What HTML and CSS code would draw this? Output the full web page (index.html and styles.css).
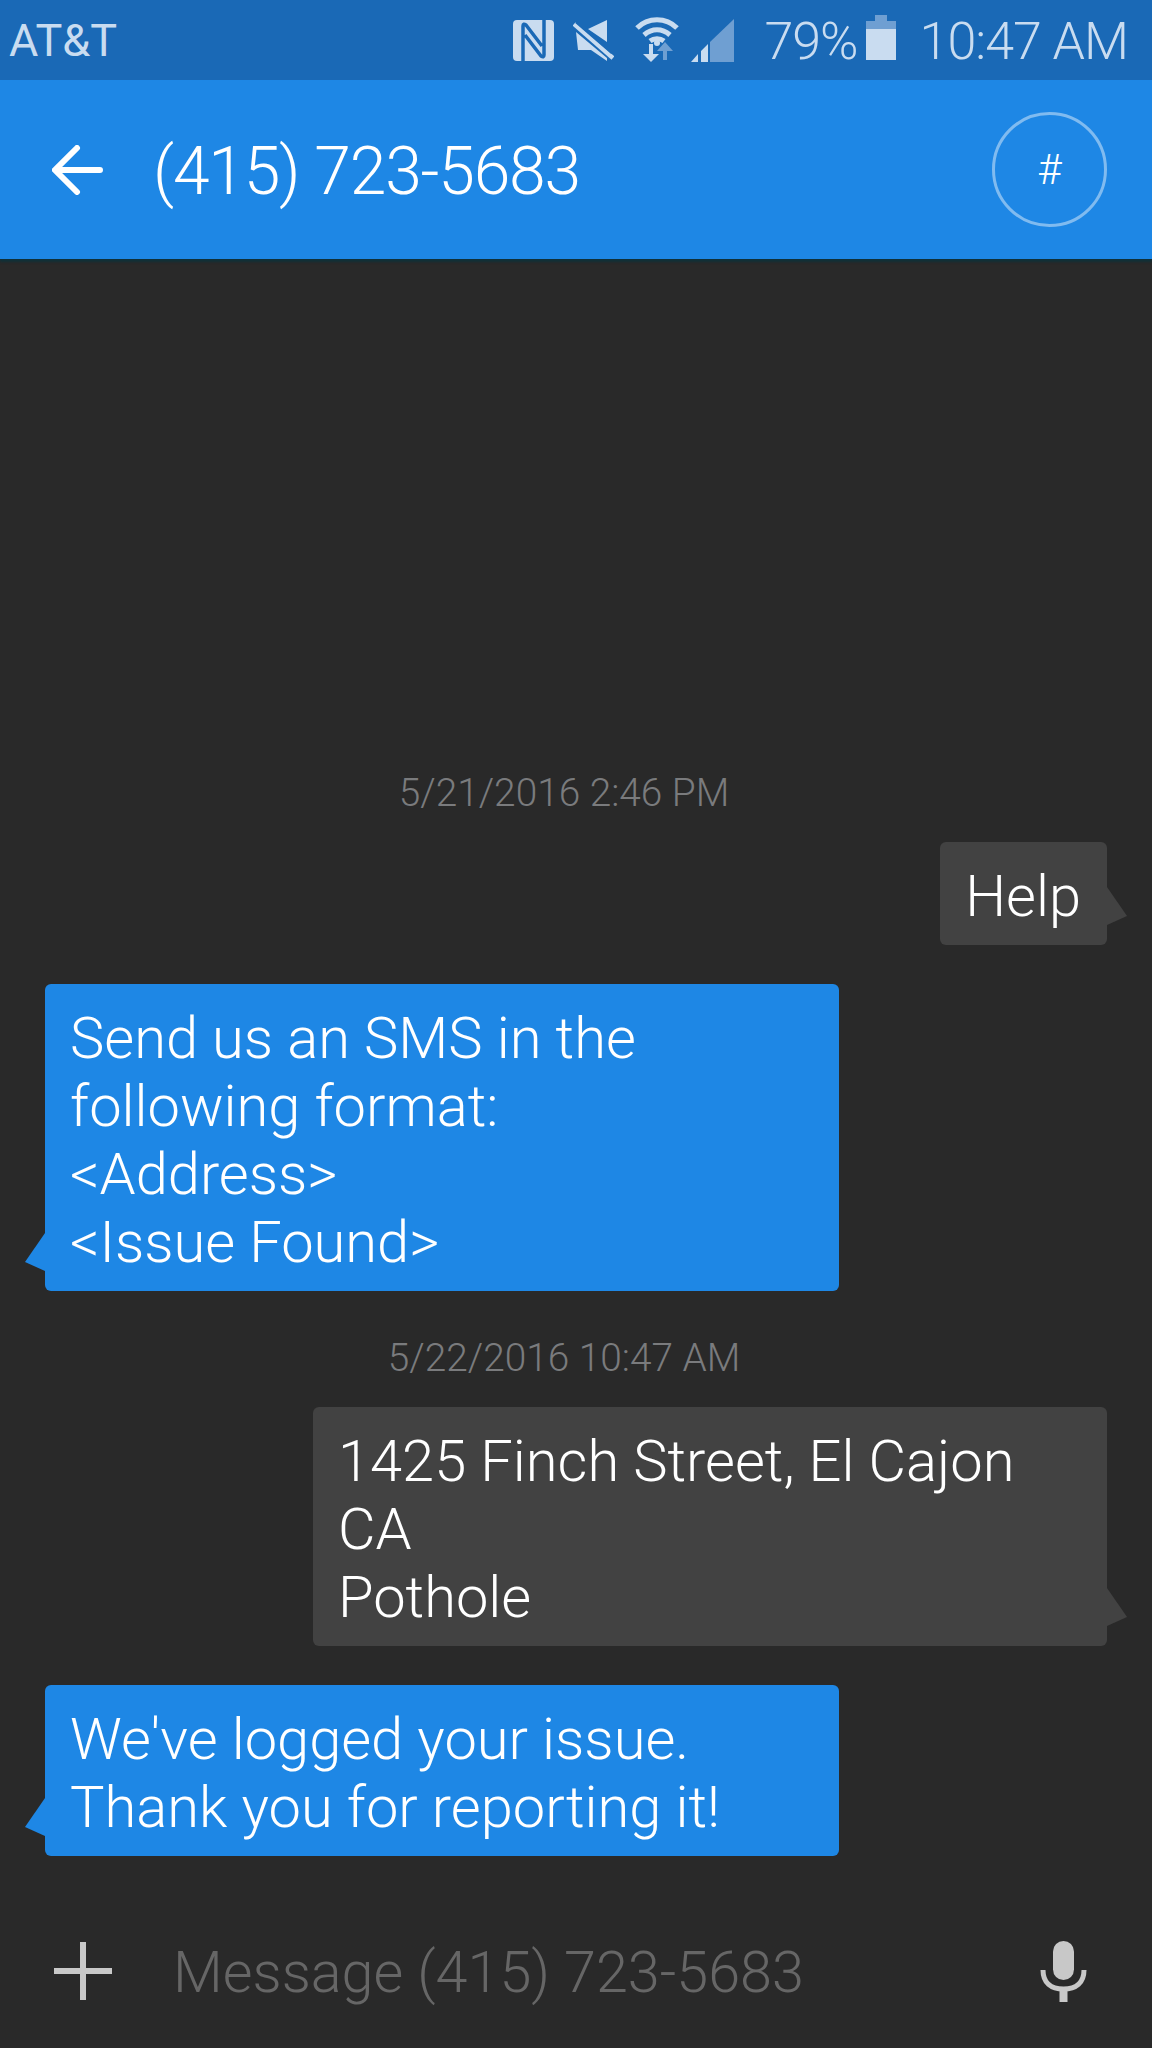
FILE: index.html
```html
<!DOCTYPE html>
<html lang="en">
<head>
    <meta charset="UTF-8">
    <meta name="viewport" content="width=device-width, initial-scale=1.0">
    <title>Messages</title>
    <link rel="stylesheet" href="styles.css">
</head>
<body>
    <div class="phone">
        <div class="status-bar">
            <span class="carrier">AT&amp;T</span>
            <div class="status-right">
                <svg class="icon-nfc" width="41" height="41" viewBox="0 0 41 41">
                    <rect width="41" height="41" rx="4" fill="#c9dcf0"/>
                    <path fill="none" stroke="#1a69b6" stroke-width="3.5" d="M10 41V6q0-3 3-1l16 21M31 0v35q0 3-3 1L12 15"/>
                </svg>
                <svg class="icon-mute" width="41" height="41" viewBox="0 0 41 41">
                    <path fill="#c9dcf0" d="M15 9L34 0v22zM3 12l31 26v3L18 30H5z"/>
                    <path stroke="#c9dcf0" stroke-width="4.5" d="M1 4l39 34"/>
                    <path stroke="#1a69b6" stroke-width="2.5" d="M3 2l36 31"/>
                </svg>
                <svg class="icon-wifi" width="44" height="46" viewBox="0 0 44 46">
                    <path fill="none" stroke="#c9dcf0" stroke-width="5" d="M2 12c11-11 29-11 40 0M9 19c8-7 18-7 26 0M15 25c4-3 10-3 14 0"/>
                    <circle cx="22" cy="27" r="3" fill="#c9dcf0"/>
                    <path fill="#c9dcf0" d="M14 28h4v10h6l-8 8-8-8h6z"/>
                    <path fill="#6f9fd2" d="M30 26l8 9h-6v9h-4v-9h-6z"/>
                </svg>
                <svg class="icon-signal" width="43" height="43" viewBox="0 0 43 43">
                    <path fill="#6f9fd2" d="M43 0v43H19V23z"/>
                    <path fill="#c9dcf0" d="M0 43l7-8v8zM10 32l7-7v18h-7z"/>
                </svg>
                <span class="battery-pct">79%</span>
                <div class="battery"><div class="battery-fill"></div></div>
                <span class="clock">10:47 AM</span>
            </div>
        </div>
        <div class="header">
            <svg class="back-arrow" width="51" height="50" viewBox="0 0 51 50">
                <path fill="none" stroke="#fff" stroke-width="6" stroke-linecap="round" d="M25 3L3 25l22 22M4 25h44"/>
            </svg>
            <div class="title">(415) 723-5683</div>
            <div class="dial-btn">#</div>
        </div>
        <div class="thread">
            <div class="stamp">5/21/2016 2:46 PM</div>
            <div class="bubble sent">Help</div>
            <div class="bubble received">Send us an SMS in the<br>following format:<br>&lt;Address&gt;<br>&lt;Issue Found&gt;</div>
            <div class="stamp stamp-two">5/22/2016 10:47 AM</div>
            <div class="bubble sent wide">1425 Finch Street, El Cajon<br>CA<br>Pothole</div>
            <div class="bubble received">We've logged your issue.<br>Thank you for reporting it!</div>
        </div>
        <div class="composer">
            <svg class="plus" width="58" height="58" viewBox="0 0 58 58">
                <path fill="#c8c8c8" d="M26 0h6v58h-6zM0 26h58v6H0z"/>
            </svg>
            <div class="placeholder">Message (415) 723-5683</div>
            <svg class="mic" width="47" height="61" viewBox="0 0 47 61">
                <rect x="13" y="0" width="21" height="39" rx="10.5" fill="#c8c8c8"/>
                <path fill="none" stroke="#c8c8c8" stroke-width="5" d="M3 29c0 13 8 19 20.500 19s20.500-6 20.500-19"/>
                <path fill="#c8c8c8" d="M19.500 47h8v14h-8z"/>
            </svg>
        </div>
    </div>
</body>
</html>
```

FILE: styles.css
```css
* {
    box-sizing: border-box;
}
html, body {
    margin: 0;
    padding: 0;
}
body {
    font-family: Roboto, "Liberation Sans", sans-serif;
    background-color: #292929;
}
.phone {
    width: 1152px;
    height: 2048px;
    display: flex;
    flex-direction: column;
    overflow: hidden;
}
.status-bar {
    height: 80px;
    background-color: #1a69b6;
    color: #c9dcf0;
    display: flex;
    justify-content: space-between;
    align-items: center;
    padding: 0 24px 0 9px;
}
.carrier {
    font-size: 45px;
}
.status-right {
    display: flex;
    align-items: center;
}
.icon-mute {
    margin-left: 19px;
}
.icon-wifi {
    margin-left: 21px;
    margin-top: -3px;
}
.icon-signal {
    margin-left: 12px;
}
.battery-pct, .clock {
    font-size: 52px;
    font-weight: 300;
    letter-spacing: -1px;
    padding-top: 3px;
}
.battery-pct {
    margin-left: 30px;
}
.battery {
    margin-left: 8px;
    margin-top: 1px;
    width: 30px;
    height: 39px;
    position: relative;
    background-color: #6f9fd2;
}
.battery::before {
    content: "";
    position: absolute;
    left: 9px;
    top: -6px;
    width: 12px;
    height: 6px;
    background-color: #6f9fd2;
}
.battery-fill {
    position: absolute;
    left: 0;
    right: 0;
    bottom: 0;
    height: 79%;
    background-color: #c9dcf0;
}
.clock {
    margin-left: 24px;
}
.header {
    height: 179px;
    background-color: #1e87e5;
    display: flex;
    align-items: center;
    padding: 0 45px 0 52px;
    color: #fff;
    box-shadow: 0 3px 2px rgba(10, 50, 60, 0.8);
}
.back-arrow {
    flex: none;
}
.title {
    flex: 1;
    margin-left: 50px;
    padding-top: 3px;
    font-size: 66px;
    font-weight: 300;
    letter-spacing: -1.2px;
}
.dial-btn {
    width: 115px;
    height: 115px;
    border: 3px solid #80bbf0;
    border-radius: 50%;
    display: flex;
    align-items: center;
    justify-content: center;
    font-size: 42px;
    font-weight: 300;
}
.thread {
    flex: 1;
    display: flex;
    flex-direction: column;
    justify-content: flex-end;
    padding: 0 45px 32px;
}
.stamp {
    text-align: center;
    color: #7a7b7d;
    font-size: 38.8px;
    font-weight: 300;
    line-height: 42px;
    margin-bottom: 28px;
    padding-top: 2px;
    padding-right: 24px;
}
.stamp-two {
    margin-top: 44px;
    margin-bottom: 28px;
}
.bubble {
    position: relative;
    color: #fff;
    font-size: 57.8px;
    font-weight: 300;
    line-height: 68px;
    padding: 20px 26px 15px 25px;
    border-radius: 6px;
}
.bubble::after {
    content: "";
    position: absolute;
    bottom: 20px;
    width: 20px;
    height: 38px;
}
.sent {
    align-self: flex-end;
    background-color: #424242;
    margin-bottom: 39px;
}
.sent::after {
    right: -20px;
    background-color: #424242;
    clip-path: polygon(0 0, 100% 76%, 0 100%);
}
.sent.wide {
    width: 794px;
}
.received {
    align-self: flex-start;
    width: 794px;
    background-color: #1e87e5;
}
.received::after {
    left: -20px;
    background-color: #1e87e5;
    clip-path: polygon(100% 0, 0 76%, 100% 100%);
}
.composer {
    height: 160px;
    display: flex;
    align-items: center;
    padding: 6px 65px 0 54px;
}
.plus {
    flex: none;
}
.placeholder {
    flex: 1;
    margin-left: 61px;
    padding-top: 3px;
    color: #666;
    font-size: 57.5px;
    font-weight: 300;
}
.mic {
    flex: none;
}
```
